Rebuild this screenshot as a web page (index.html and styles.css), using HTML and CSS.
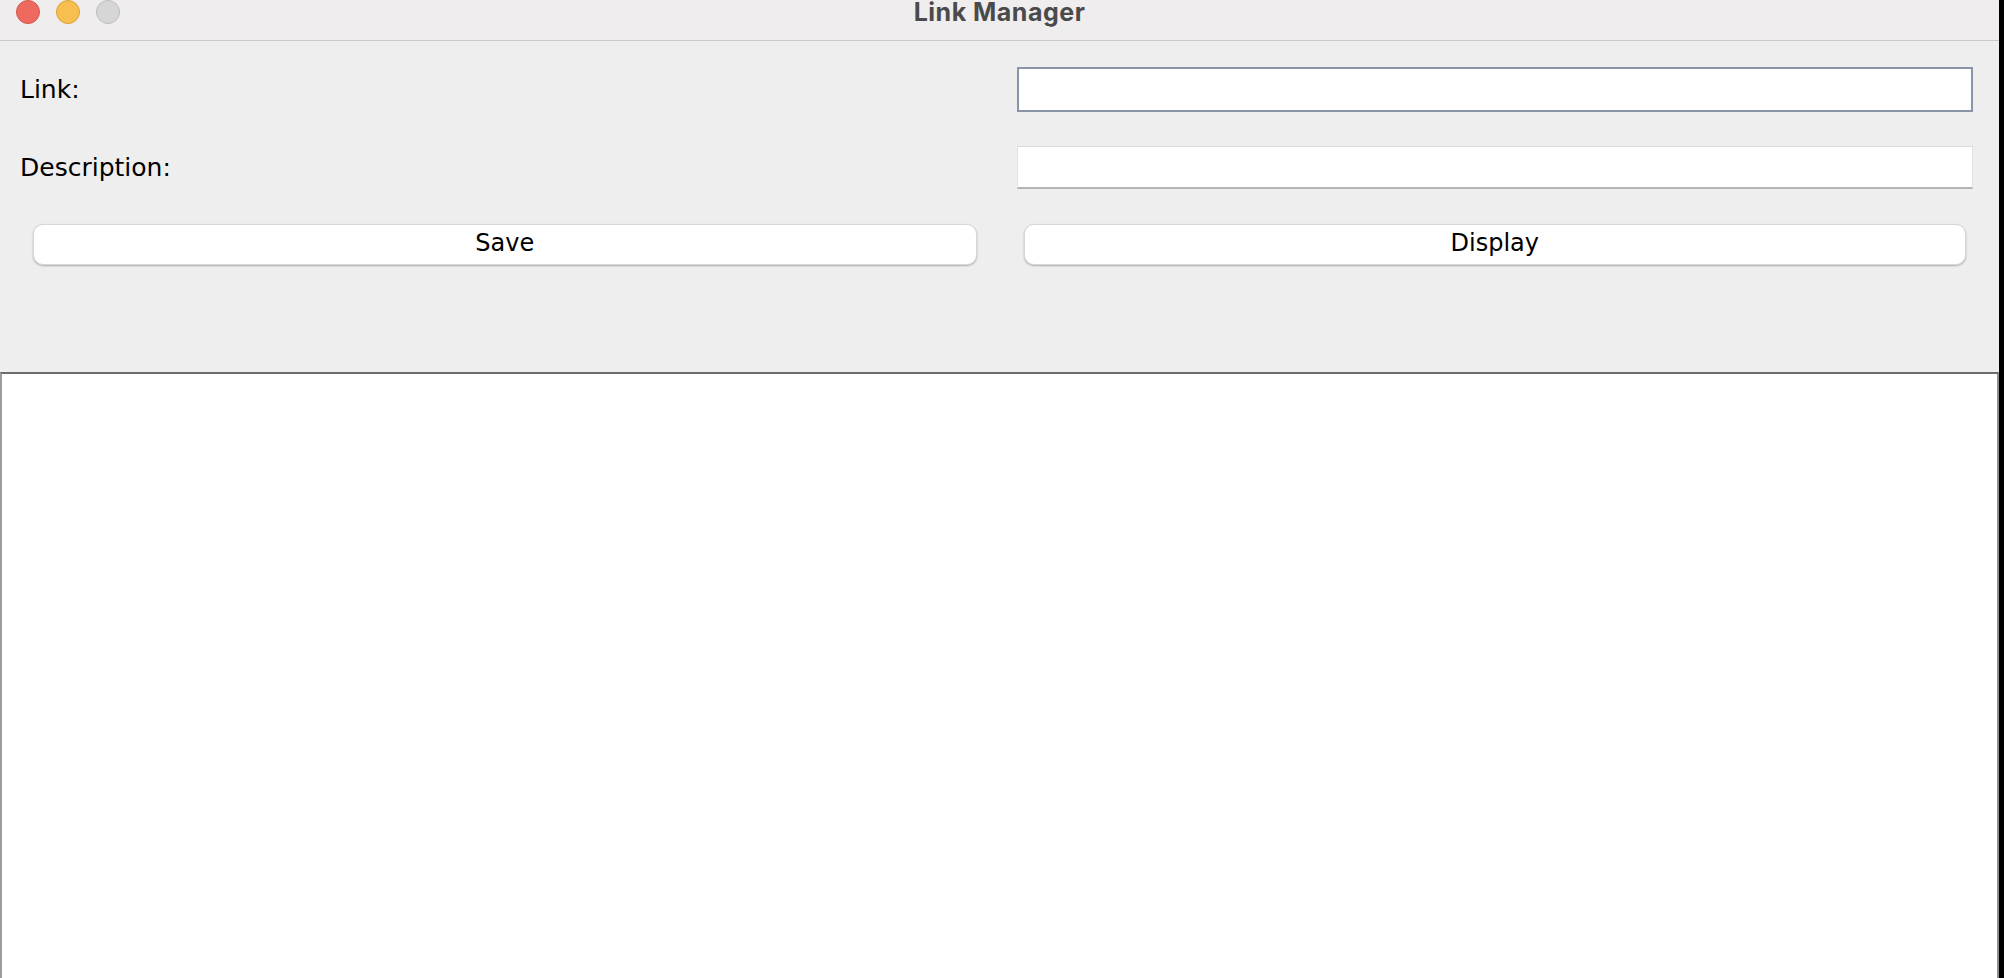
FILE: index.html
```html
<!DOCTYPE html>
<html>
<head>
<meta charset="utf-8">
<title>Link Manager</title>
<link rel="stylesheet" href="styles.css">
</head>
<body>
<div class="window">
  <div class="titlebar">
    <div class="lights">
      <span class="light red"></span>
      <span class="light yellow"></span>
      <span class="light grey"></span>
    </div>
    <div class="title">Link Manager</div>
  </div>
  <div class="form">
    <div class="cell"><label class="label">Link:</label></div>
    <div class="cell"><input class="field focused" type="text"></div>
    <div class="cell"><label class="label">Description:</label></div>
    <div class="cell"><input class="field" type="text"></div>
    <div class="cell"><button class="btn btn-left">Save</button></div>
    <div class="cell"><button class="btn btn-right">Display</button></div>
  </div>
  <div class="output"></div>
</div>
</body>
</html>
```
FILE: styles.css
```css
html, body {
  margin: 0;
  padding: 0;
  background: #000;
  height: 978px;
  overflow: hidden;
}
.window {
  width: 1999px;
  height: 978px;
  display: flex;
  flex-direction: column;
  background: #eeeeee;
  font-family: "DejaVu Sans", "Liberation Sans", sans-serif;
}
.titlebar {
  height: 40px;
  flex: none;
  background: #efedee;
  border-bottom: 1px solid #c9c9c9;
  position: relative;
  display: flex;
  justify-content: center;
  align-items: flex-start;
}
.lights {
  position: absolute;
  left: 16px;
  top: 0;
  display: flex;
  gap: 16px;
}
.light {
  width: 24px;
  height: 24px;
  border-radius: 50%;
  box-sizing: border-box;
}
.red { background: #ee6a5e; border: 1px solid #d35649; }
.yellow { background: #f6bf4f; border: 1px solid #d9a23a; }
.grey { background: #d7d6d7; border: 1px solid #bdbcbd; }
.title {
  font-family: Inter, "DejaVu Sans", sans-serif;
  font-weight: 700;
  font-size: 25px;
  letter-spacing: 0.5px;
  line-height: 26px;
  color: #4b4a4b;
  margin-top: -1px;
}
.form {
  height: 331px;
  flex: none;
  box-sizing: border-box;
  padding-top: 9px;
  display: grid;
  grid-template-columns: 1fr 1fr;
  grid-template-rows: 78px 78px 78px;
  align-items: center;
}
.cell {
  display: flex;
  align-items: center;
}
.label {
  padding-left: 20px;
  font-size: 25px;
  color: #000;
}
.field {
  box-sizing: border-box;
  margin: 0 26px 0 17px;
  width: 100%;
  height: 43px;
  background: #fff;
  border-top: 1px solid #d9d9d9;
  border-left: 1px solid #e2e2e2;
  border-right: 1px solid #e2e2e2;
  border-bottom: 2px solid #b4b4b4;
  outline: none;
  padding: 0;
}
.field.focused {
  height: 45px;
  border: 2px solid #8995a6;
}
.btn {
  box-sizing: border-box;
  width: 100%;
  height: 41px;
  background: #fff;
  border: 1px solid #d8d8d8;
  border-radius: 10px;
  box-shadow: 0 1px 2px rgba(0, 0, 0, 0.28);
  font-family: "DejaVu Sans", "Liberation Sans", sans-serif;
  font-size: 24px;
  line-height: 36px;
  color: #000;
  padding: 0 0 2px 0;
  margin-top: -2px;
}
.btn-left { margin-left: 33px; margin-right: 23px; }
.btn-right { margin-left: 24px; margin-right: 33px; }
.output {
  flex: 1;
  background: #fff;
  border-top: 2px solid #6b6b6b;
  border-left: 2px solid #9c9c9c;
  border-right: 2px solid #8e8e8e;
}
```
